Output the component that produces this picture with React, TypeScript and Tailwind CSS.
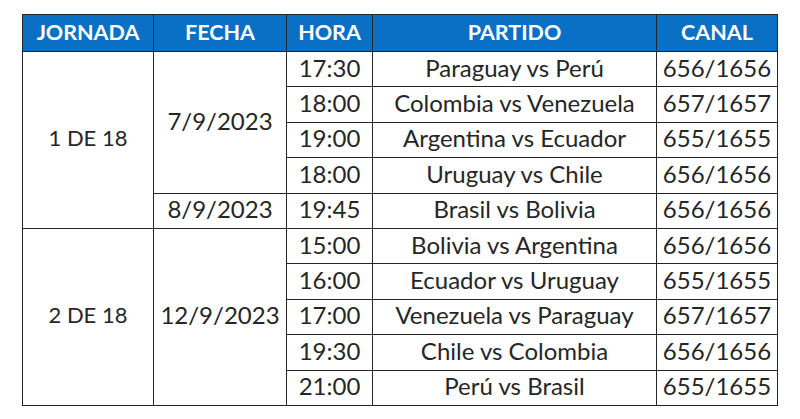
const jornadas = [
  {
    nombre: "1 DE 18",
    fechas: [
      {
        fecha: "7/9/2023",
        partidos: [
          { hora: "17:30", partido: "Paraguay vs Perú", canal: "656/1656" },
          { hora: "18:00", partido: "Colombia vs Venezuela", canal: "657/1657" },
          { hora: "19:00", partido: "Argentina vs Ecuador", canal: "655/1655" },
          { hora: "18:00", partido: "Uruguay vs Chile", canal: "656/1656" },
        ],
      },
      {
        fecha: "8/9/2023",
        partidos: [{ hora: "19:45", partido: "Brasil vs Bolivia", canal: "656/1656" }],
      },
    ],
  },
  {
    nombre: "2 DE 18",
    fechas: [
      {
        fecha: "12/9/2023",
        partidos: [
          { hora: "15:00", partido: "Bolivia vs Argentina", canal: "656/1656" },
          { hora: "16:00", partido: "Ecuador vs Uruguay", canal: "655/1655" },
          { hora: "17:00", partido: "Venezuela vs Paraguay", canal: "657/1657" },
          { hora: "19:30", partido: "Chile vs Colombia", canal: "656/1656" },
          { hora: "21:00", partido: "Perú vs Brasil", canal: "655/1655" },
        ],
      },
    ],
  },
];

const cell = "border-[1.5px] border-[#262626] text-center align-middle p-0";
const body = cell + " pb-[3px]";

export default function App() {
  return (
    <div
      className="w-[800px] h-[419px] bg-white pt-[14px] pl-[22px] text-[#262626]"
      style={{ fontFamily: "Lato, 'Open Sans', sans-serif" }}
    >
      <table className="border-collapse table-fixed w-[755px] text-[24px] leading-none">
        <colgroup>
          <col className="w-[131px]" />
          <col className="w-[133px]" />
          <col className="w-[86px]" />
          <col className="w-[284px]" />
          <col className="w-[121px]" />
        </colgroup>
        <thead>
          <tr className="h-[37px] bg-[#0a70c6] text-white font-bold text-[21.5px]">
            <th className={cell}>JORNADA</th>
            <th className={cell}>FECHA</th>
            <th className={cell}>HORA</th>
            <th className={cell}>PARTIDO</th>
            <th className={cell}>CANAL</th>
          </tr>
        </thead>
        <tbody>
          {jornadas.map((j) => {
            const total = j.fechas.reduce((n, f) => n + f.partidos.length, 0);
            return j.fechas.map((f, fi) =>
              f.partidos.map((p, pi) => (
                <tr key={j.nombre + f.fecha + pi} className="h-[35.4px]">
                  {fi === 0 && pi === 0 && (
                    <td rowSpan={total} className={body + " text-[22px]"}>
                      {j.nombre}
                    </td>
                  )}
                  {pi === 0 && (
                    <td rowSpan={f.partidos.length} className={body}>
                      {f.fecha}
                    </td>
                  )}
                  <td className={body}>{p.hora}</td>
                  <td className={body}>{p.partido}</td>
                  <td className={body}>{p.canal}</td>
                </tr>
              ))
            );
          })}
        </tbody>
      </table>
    </div>
  );
}
